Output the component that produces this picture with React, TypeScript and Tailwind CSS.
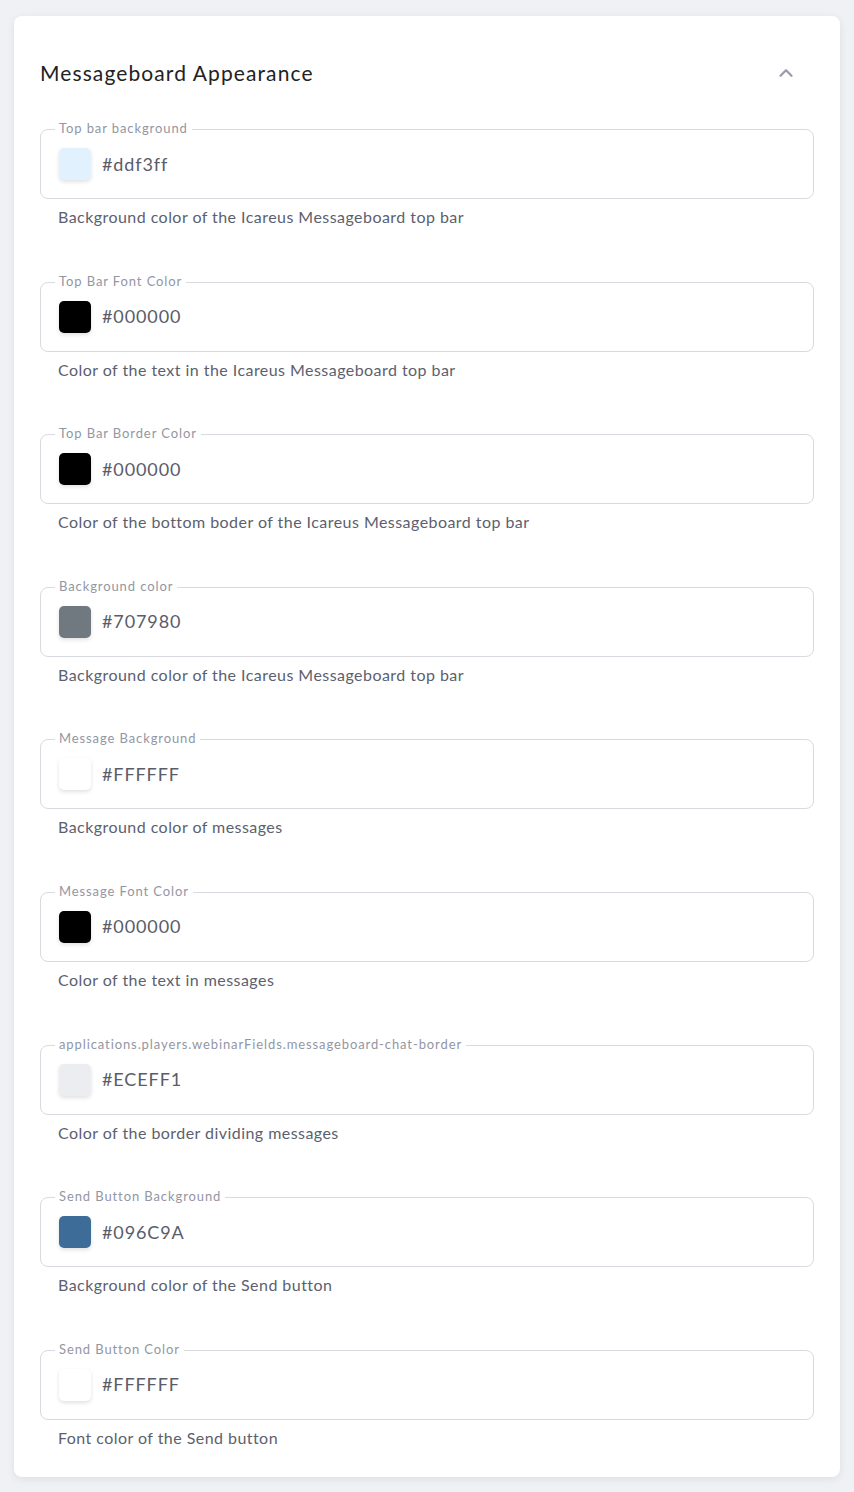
import React from 'react';
import { ChevronUp } from 'lucide-react';

interface ColorField {
    label: string;
    value: string;
    swatch: string;
    help: string;
}

const fields: ColorField[] = [
    { label: 'Top bar background', value: '#ddf3ff', swatch: '#e1f1fe', help: 'Background color of the Icareus Messageboard top bar' },
    { label: 'Top Bar Font Color', value: '#000000', swatch: '#000000', help: 'Color of the text in the Icareus Messageboard top bar' },
    { label: 'Top Bar Border Color', value: '#000000', swatch: '#000000', help: 'Color of the bottom boder of the Icareus Messageboard top bar' },
    { label: 'Background color', value: '#707980', swatch: '#707980', help: 'Background color of the Icareus Messageboard top bar' },
    { label: 'Message Background', value: '#FFFFFF', swatch: '#FFFFFF', help: 'Background color of messages' },
    { label: 'Message Font Color', value: '#000000', swatch: '#000000', help: 'Color of the text in messages' },
    { label: 'applications.players.webinarFields.messageboard-chat-border', value: '#ECEFF1', swatch: '#ECEDF1', help: 'Color of the border dividing messages' },
    { label: 'Send Button Background', value: '#096C9A', swatch: '#3e6c99', help: 'Background color of the Send button' },
    { label: 'Send Button Color', value: '#FFFFFF', swatch: '#FFFFFF', help: 'Font color of the Send button' },
];

const ColorInput: React.FC<{ field: ColorField }> = ({ field }) => (
    <div>
        <div className="relative h-[70px] border border-[#d9dae0] rounded-lg flex items-center pl-[18px] gap-[11px]">
            <span className="absolute -top-[10px] left-[14px] bg-white px-[4px] text-[13px] leading-4 tracking-[0.9px] text-[#9396a3]">
                {field.label}
            </span>
            <div
                className="w-8 h-8 rounded-[5px] shadow-[0_2px_4px_rgba(0,0,0,0.12)]"
                style={{ backgroundColor: field.swatch }}
            />
            <span className="text-[18px] tracking-[0.9px] text-[#5a5c6a]">{field.value}</span>
        </div>
        <p className="mt-[6px] pl-[18px] text-base leading-6 tracking-[0.45px] text-[#5c5f6f]">{field.help}</p>
    </div>
);

export default function App() {
    return (
        <div className="min-h-[1492px] bg-[#f0f1f5] pt-4 px-[14px] font-['Lato',sans-serif]">
            <div className="w-[826px] bg-white rounded-lg shadow-[0_2px_8px_rgba(0,0,0,0.08)] px-[26px] pt-[43px] pb-[27px]">
                <div className="flex items-center justify-between h-7">
                    <h2 className="text-[21px] leading-7 tracking-[1.1px] text-[#222]">Messageboard Appearance</h2>
                    <ChevronUp className="mr-[17px] text-[#9a9cab]" size={22} strokeWidth={2.5} />
                </div>
                <div className="mt-[42px] flex flex-col gap-[52.6px]">
                    {fields.map((f, i) => (
                        <ColorInput key={i} field={f} />
                    ))}
                </div>
            </div>
        </div>
    );
}
